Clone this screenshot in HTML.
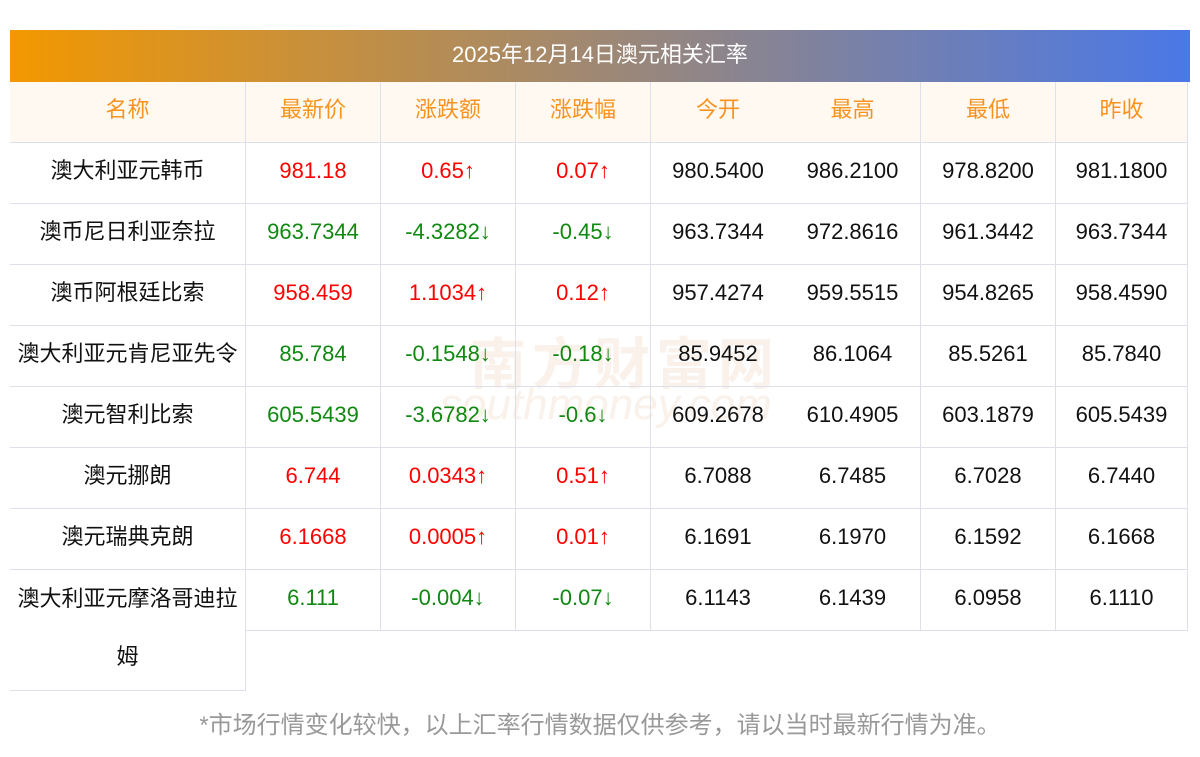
<!DOCTYPE html>
<html><head><meta charset="utf-8"><style>
body{margin:0;width:1200px;height:757px;background:#fff;position:relative;overflow:hidden;font-family:"Liberation Sans","Noto Sans CJK SC",sans-serif;}
.t{position:absolute;left:10px;top:30px;width:1180px;height:52px;background:linear-gradient(90deg,#f39800,#4a78e8);color:#fff;font-size:22px;line-height:50px;text-align:center;}
.c{position:absolute;height:60px;line-height:56px;text-align:center;font-size:22px;color:#111;border-bottom:1px solid #dde0ea;}
.h{background:#fff9f2;color:#f7931e;}
.bl{border-left:1px solid #dde0ea;}
.r{color:#f00}.g{color:#118811}
.f{position:absolute;left:0;top:706px;width:1200px;text-align:center;font-size:24px;color:#999;line-height:40px;}
.wm{position:absolute;left:470px;top:320px;font-size:56px;color:rgba(230,200,170,0.25);letter-spacing:6px;font-weight:bold;}
.wm2{position:absolute;left:440px;top:380px;font-size:44px;color:rgba(230,200,170,0.25);font-style:italic;}
</style></head><body>
<div class="t">2025年12月14日澳元相关汇率</div>
<div class="wm">南方财富网</div><div class="wm2">southmoney.com</div>
<div id="tb"></div>
<div class="f">*市场行情变化较快，以上汇率行情数据仅供参考，请以当时最新行情为准。</div>
<script>
var xs=[10,245,380,515,650,785,920,1055,1188];
var bl=[0,1,1,1,1,0,1,1];
var H=["名称","最新价","涨跌额","涨跌幅","今开","最高","最低","昨收"];
var D=[
["澳大利亚元韩币","981.18","0.65↑","0.07↑","980.5400","986.2100","978.8200","981.1800"],
["澳币尼日利亚奈拉","963.7344","-4.3282↓","-0.45↓","963.7344","972.8616","961.3442","963.7344"],
["澳币阿根廷比索","958.459","1.1034↑","0.12↑","957.4274","959.5515","954.8265","958.4590"],
["澳大利亚元肯尼亚先令","85.784","-0.1548↓","-0.18↓","85.9452","86.1064","85.5261","85.7840"],
["澳元智利比索","605.5439","-3.6782↓","-0.6↓","609.2678","610.4905","603.1879","605.5439"],
["澳元挪朗","6.744","0.0343↑","0.51↑","6.7088","6.7485","6.7028","6.7440"],
["澳元瑞典克朗","6.1668","0.0005↑","0.01↑","6.1691","6.1970","6.1592","6.1668"],
["澳大利亚元摩洛哥迪拉","6.111","-0.004↓","-0.07↓","6.1143","6.1439","6.0958","6.1110"]];
var s="";
function cell(i,tp,txt,cls){var w=xs[i+1]-xs[i]-(bl[i]?1:0);if(i==7)w=xs[8]-xs[7]-2;
var st="left:"+xs[i]+"px;top:"+tp+"px;width:"+w+"px;"+(i==7?"border-right:1px solid #dde0ea;":"");
s+='<div class="c '+cls+(bl[i]?" bl":"")+'" style="'+st+'">'+txt+'</div>';}
for(var i=0;i<8;i++)cell(i,82,H[i],"h");
for(var r=0;r<8;r++){var tp=143+r*61;for(var i=0;i<8;i++){var v=D[r][i],cl="";
if(i>=1&&i<=3)cl=(D[r][2].indexOf("↑")>=0)?"r":"g";
if(r==7&&i==0){s+='<div class="c" style="left:10px;top:'+tp+'px;width:235px;height:120px;line-height:58px;border-right:1px solid #dde0ea;">澳大利亚元摩洛哥迪拉<br>姆</div>';continue;}
cell(i,tp,v,cl);}}
document.getElementById("tb").innerHTML=s;
</script>
</body></html>
